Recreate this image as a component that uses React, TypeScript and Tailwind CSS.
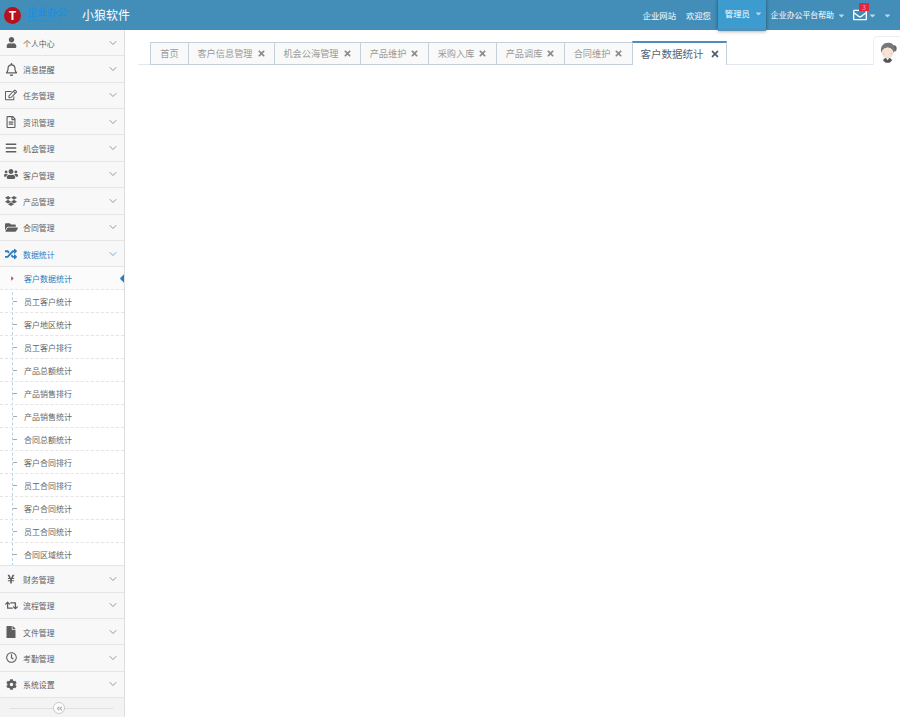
import type { IconType } from 'react-icons';
import { ChevronDown } from 'lucide-react';
import {
    FaAngleDoubleLeft,
    FaBars,
    FaCaretDown,
    FaCaretLeft,
    FaCaretRight,
    FaCog,
    FaDropbox,
    FaFile,
    FaFolderOpen,
    FaRandom,
    FaRegBell,
    FaRegClock,
    FaRegEdit,
    FaRegEnvelope,
    FaRegFileAlt,
    FaRetweet,
    FaTimes,
    FaUser,
    FaUsers,
    FaYenSign,
} from 'react-icons/fa';

type Menu = { label: string; icon: IconType; size: string };

const topMenus: Menu[] = [
    { label: '个人中心', icon: FaUser, size: 'text-[11px]' },
    { label: '消息提醒', icon: FaRegBell, size: 'text-[13px]' },
    { label: '任务管理', icon: FaRegEdit, size: 'text-[12px]' },
    { label: '资讯管理', icon: FaRegFileAlt, size: 'text-[12px]' },
    { label: '机会管理', icon: FaBars, size: 'text-[12px]' },
    { label: '客户管理', icon: FaUsers, size: 'text-[14px]' },
    { label: '产品管理', icon: FaDropbox, size: 'text-[12px]' },
    { label: '合同管理', icon: FaFolderOpen, size: 'text-[13px]' },
];

const subMenus = [
    '客户数据统计',
    '员工客户统计',
    '客户地区统计',
    '员工客户排行',
    '产品总额统计',
    '产品销售排行',
    '产品销售统计',
    '合同总额统计',
    '客户合同排行',
    '员工合同排行',
    '客户合同统计',
    '员工合同统计',
    '合同区域统计',
];

const bottomMenus: Menu[] = [
    { label: '财务管理', icon: FaYenSign, size: 'text-[10px]' },
    { label: '流程管理', icon: FaRetweet, size: 'text-[13px]' },
    { label: '文件管理', icon: FaFile, size: 'text-[12px]' },
    { label: '考勤管理', icon: FaRegClock, size: 'text-[11px]' },
    { label: '系统设置', icon: FaCog, size: 'text-[11px]' },
];

const tabs = [
    { label: '首页', width: 'w-[38px]', closable: false },
    { label: '客户信息管理', width: 'w-[86px]', closable: true },
    { label: '机会公海管理', width: 'w-[86px]', closable: true },
    { label: '产品维护', width: 'w-[68px]', closable: true },
    { label: '采购入库', width: 'w-[68px]', closable: true },
    { label: '产品调库', width: 'w-[68px]', closable: true },
    { label: '合同维护', width: 'w-[68px]', closable: true },
];

function MenuItem({ label, icon: Icon, size, active }: Menu & { active?: boolean }) {
    return (
        <div
            className={`flex h-[26.4px] items-center border-b border-[#e5e5e5] bg-[#f8f8f8] ${
                active ? 'text-[#2b7dbc]' : 'text-[#5f5f5f]'
            }`}>
            <span className="flex w-[22px] shrink-0 justify-center">
                <Icon className={size} />
            </span>
            <span className="ml-[1px] mt-[2px] text-[7.900px] leading-none">{label}</span>
            <ChevronDown
                size={12}
                strokeWidth={1.5}
                className={`ml-auto mr-[5px] ${active ? 'text-[#4f8fc0]' : 'text-[#777]'}`}
            />
        </div>
    );
}

function Sidebar() {
    return (
        <aside className="relative flex w-[125px] shrink-0 flex-col border-r border-[#dddddd] bg-[#f2f2f2]">
            {topMenus.map((m) => (
                <MenuItem key={m.label} {...m} />
            ))}
            <MenuItem label="数据统计" icon={FaRandom} size="text-[12px]" active />
            <div className="relative bg-white">
                {/* 左侧虚线 */}
                <div className="absolute bottom-0 left-[12px] top-0 border-l border-dashed border-[#b5d2e6]" />
                {subMenus.map((label, i) => (
                    <div
                        key={label}
                        className={`relative flex h-[23px] items-center overflow-hidden border-b border-dashed border-[#e4e4e4] pl-[24px] pt-[2px] text-[8px] ${
                            i === 0 ? 'bg-[#fbfbfb] text-[#2b7dbc]' : 'text-[#666]'
                        } ${i === subMenus.length - 1 ? 'border-solid border-[#e5e5e5]' : ''}`}>
                        {i === 0 ? (
                            <>
                                <FaCaretRight className="absolute left-[9px] top-[8px] text-[7px] text-[#c0504d]" />
                                <FaCaretLeft className="absolute right-[-7px] top-[3px] text-[17px] text-[#2b7dbc]" />
                            </>
                        ) : (
                            <span className="absolute left-[13px] top-[11px] w-[4px] border-t border-dashed border-[#a8a8a8]" />
                        )}
                        {label}
                    </div>
                ))}
            </div>
            {bottomMenus.map((m) => (
                <MenuItem key={m.label} {...m} />
            ))}
            <div className="relative flex h-[19px] items-center justify-center bg-[#f3f3f3] pr-[6px] pt-[1px]">
                <div className="absolute left-[10px] right-[11px] top-[10px] border-t border-[#e0e0e0]" />
                <span className="relative flex h-[12px] w-[12px] items-center justify-center rounded-full border border-[#c8c8c8] bg-white">
                    <FaAngleDoubleLeft className="text-[7px] text-[#aaa]" />
                </span>
            </div>
        </aside>
    );
}

function Header() {
    return (
        <header className="flex h-[30px] shrink-0 items-start bg-[#438eb9] text-white">
            <div className="flex h-[30px] items-center">
                <span className="ml-[4px] flex h-[17px] w-[17px] items-center justify-center rounded-full bg-[#b5121b] text-[12px] font-bold leading-none">
                    T
                </span>
                <div className="ml-[6px] flex w-[55px] flex-col whitespace-nowrap text-[#1e8fe0] font-['Liberation_Sans','Noto_Sans_CJK_SC',sans-serif]">
                    <span className="text-[10px] font-bold leading-[11px]">企业办公</span>
                    <span className="text-[4px] leading-[5px]">ARBOAHUO.COM</span>
                </div>
                <span className="text-[12px] leading-none">小狼软件</span>
            </div>
            <nav className="ml-auto flex h-[30px] items-center text-[8.300px] leading-none">
                <span>企业网站</span>
                <span className="ml-[10px]">欢迎您</span>
                <div className="relative ml-[7px] flex h-[32px] w-[48px] items-start bg-[#3d9ccf] shadow-[0_0_4px_rgba(0,0,0,0.45)]">
                    <div className="flex h-[29px] w-full items-center pl-[7px]">
                        管理员
                        <FaCaretDown className="ml-[4px] text-[9px] text-[#b9d8ea]" />
                    </div>
                    <div className="absolute bottom-0 h-[3px] w-full bg-[#4f93ba]" />
                </div>
                <span className="ml-[5px] text-[7.900px]">企业办公平台帮助</span>
                <FaCaretDown className="ml-[3px] text-[9px] text-[#b9d8ea]" />
                <span className="relative ml-[7px] flex">
                    <FaRegEnvelope className="text-[14px]" />
                    <span className="absolute left-[6px] top-[-5px] flex h-[8px] w-[10px] items-center justify-center bg-[#e0283c] text-[7px] text-[#f9a]">
                        3
                    </span>
                </span>
                <FaCaretDown className="ml-[1px] text-[9px] text-[#b9d8ea]" />
                <FaCaretDown className="ml-[6px] mr-[8px] text-[9px] text-[#b9d8ea]" />
            </nav>
        </header>
    );
}

function Avatar() {
    return (
        <div className="flex h-[29px] w-[27px] items-start justify-center rounded-tl-[5px] border-l border-t border-[#e8eef4] bg-white">
            <svg viewBox="0 0 24 26" className="ml-[2px] mt-[4px] h-[22px] w-[20px]">
                {/* 头发 */}
                <path d="M4 14C2 6 7 2 12 2s9 3 8 10l-2 2c-1-4-3-6-6-6-4 0-6 2-8 6z" fill="#777" />
                <path d="M19 5c3 0 4 3 3 6l-2 2z" fill="#666" />
                {/* 脸 */}
                <ellipse cx="11.500" cy="14" rx="7" ry="6.500" fill="#f6e3d6" />
                <circle cx="7" cy="15" r="1.500" fill="#f3cfc0" />
                <circle cx="16" cy="15" r="1.500" fill="#f3cfc0" />
                {/* 衣服 */}
                <path d="M6 23c1-2 3-3 5.500-3s4.500 1 5.500 3l-3 3H9z" fill="#555" />
                <path d="M9.500 20l2 3 2-3z" fill="#fff" />
            </svg>
        </div>
    );
}

function TabBar() {
    return (
        <div className="mt-[6px] flex items-end pl-[12.500px]">
            <div className="flex flex-1 border-b border-[#e2e8ef] pl-[12px]">
                {tabs.map((t) => (
                    <div
                        key={t.label}
                        className={`-mb-px box-border flex h-[23px] items-center justify-center border-y border-l border-[#c5d0dc] bg-[#f9f9f9] pl-[1px] text-[9.200px] leading-none text-[#999] ${t.width}`}>
                        {t.label}
                        {t.closable && <FaTimes className="ml-[4px] text-[9px] text-[#8c8c8c]" />}
                    </div>
                ))}
                <div className="-mb-px -mt-px box-border flex h-[24px] w-[95px] items-center justify-center border-x border-t-2 border-[#c5d0dc] border-t-[#4c8fbd] bg-white pl-[2px] text-[10.500px] leading-none text-[#576373]">
                    客户数据统计
                    <FaTimes className="ml-[6px] text-[10px] text-[#55606e]" />
                </div>
            </div>
            <Avatar />
        </div>
    );
}

export default function App() {
    return (
        <div className="flex h-[717px] w-[900px] flex-col overflow-hidden bg-white font-['Noto_Sans_CJK_SC','Liberation_Sans',sans-serif]">
            <Header />
            <div className="flex flex-1 overflow-hidden">
                <Sidebar />
                <main className="flex-1">
                    <TabBar />
                </main>
            </div>
        </div>
    );
}
